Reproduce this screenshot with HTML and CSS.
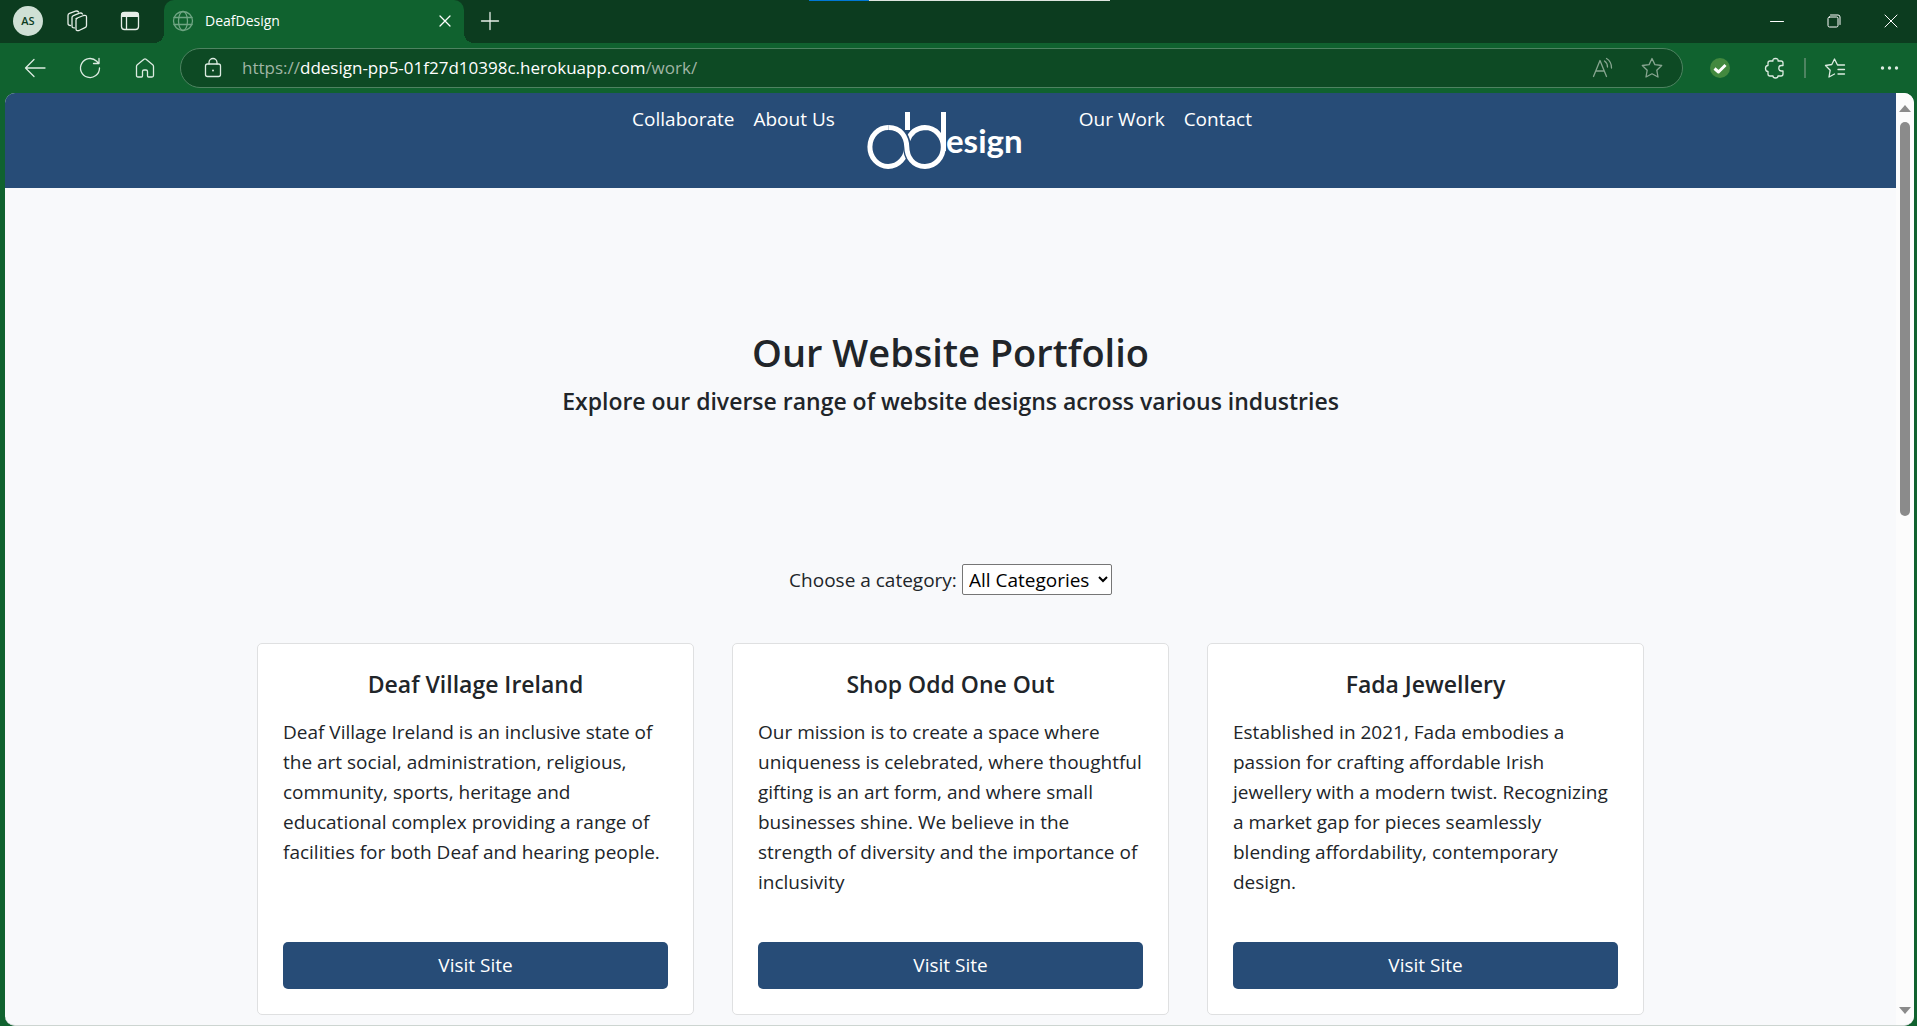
FILE: index.html
```
<!DOCTYPE html>
<html lang="en">
<head>
<meta charset="utf-8">
<title>DeafDesign</title>
<link rel="stylesheet" href="styles.css">
</head>
<body class="browser">
<div class="load-bar"><div class="load-done"></div></div>
<header class="tab-strip">
  <button class="strip-button profile" aria-label="Profile"><span class="avatar">AS</span></button>
  <button class="strip-button" aria-label="Workspaces">
    <svg class="icon" viewBox="0 0 24 24"><path d="M10 9.500 17.500 6.500Q20.500 5.800 20.500 8V16.500Q20.500 18 19 18.700L13 21.500Q10 22.300 10 20V11Q10 9.800 11.500 9.200"/><path d="M8.500 18.800Q6 19 6 17V8.500Q6 7.300 7.500 6.700L13.500 4.200Q15.500 3.500 16.500 5"/><path d="M4.500 16.500Q2 16.500 2 14.500V6.500Q2 5 3.500 4.400L9.500 2.200Q11.500 1.600 12.500 3"/></svg>
  </button>
  <button class="strip-button" aria-label="Tab actions">
    <svg class="icon" viewBox="0 0 24 24"><rect x="3.500" y="3.500" width="17" height="17" rx="3"/><path class="solid" d="M3 8V6Q3 3 6 3H18Q21 3 21 6V8Z"/><path d="M8.500 8V20"/></svg>
  </button>
  <div class="tab">
    <svg class="icon globe" viewBox="0 0 24 24"><circle cx="12" cy="12" r="9.500"/><ellipse cx="12" cy="12" rx="4.500" ry="9.500"/><path d="M3 8.500H21M3 15.500H21"/></svg>
    <span class="tab-title">DeafDesign</span>
    <button class="tab-close" aria-label="Close tab"><svg class="icon-small" viewBox="0 0 12 12"><path d="M1 1 11 11M11 1 1 11"/></svg></button>
  </div>
  <button class="strip-button" aria-label="New tab"><svg class="icon" viewBox="0 0 24 24"><path d="M12 3.500V20.500M3.500 12H20.500"/></svg></button>
  <div class="window-controls">
    <button class="window-button" aria-label="Minimize"><svg class="icon-window" viewBox="0 0 14 14"><path d="M0.500 7.500H13.500"/></svg></button>
    <button class="window-button" aria-label="Restore"><svg class="icon-window" viewBox="0 0 14 14"><rect x="1" y="3" width="10" height="10" rx="1.500"/><path d="M3.500 1H11Q13 1 13 3V10.500"/></svg></button>
    <button class="window-button" aria-label="Close"><svg class="icon-window" viewBox="0 0 14 14"><path d="M1 1 13 13M13 1 1 13"/></svg></button>
  </div>
</header>
<div class="toolbar">
  <button class="tool" aria-label="Back"><svg class="icon" viewBox="0 0 24 24"><path d="M22 12H2.500M11 3.500 2.500 12 11 20.500"/></svg></button>
  <button class="tool" aria-label="Refresh"><svg class="icon" viewBox="0 0 24 24"><path d="M21.500 12A9.500 9.500 0 1 1 18.700 5.300L20.500 7.200M21 2.500V7.500H15.500"/></svg></button>
  <button class="tool" aria-label="Home"><svg class="icon" viewBox="0 0 24 24"><path d="M3.500 10.500Q3.500 9.500 4.300 8.800L11 3.200Q12 2.500 13 3.200L19.700 8.800Q20.500 9.500 20.500 10.500V19.500Q20.500 21 19 21H15.500Q14.500 21 14.500 20V15.500Q14.500 14 13 14H11Q9.500 14 9.500 15.500V20Q9.500 21 8.500 21H5Q3.500 21 3.500 19.500Z"/></svg></button>
  <div class="address">
    <svg class="icon" viewBox="0 0 24 24"><rect x="4.500" y="8" width="15" height="12.500" rx="2"/><path d="M8 8V6.500A4 4 0 0 1 16 6.500V8"/><circle class="solid" cx="12" cy="14.500" r="1"/></svg>
    <a class="url" href="#"><span class="url-dim">https://</span>ddesign-pp5-01f27d10398c.herokuapp.com<span class="url-dim">/work/</span></a>
    <button class="address-button" aria-label="Read aloud"><svg class="icon" viewBox="0 0 24 24"><path d="M2.500 20.500 9 4.500 15.500 20.500M5 15H13"/><path d="M13.500 5Q16.500 7 16.500 11M15.500 2.500Q20.500 5.500 20.500 12"/></svg></button>
    <button class="address-button" aria-label="Add to favorites"><svg class="icon" viewBox="0 0 24 24"><path d="M12 2.500 14.900 8.600 21.700 9.500 16.800 14.200 18 21 12 17.800 6 21 7.200 14.200 2.300 9.500 9.100 8.600Z"/></svg></button>
  </div>
  <button class="tool" aria-label="Extension"><svg class="icon" viewBox="0 0 24 24"><circle class="badge-fill" cx="12" cy="12" r="10"/><path class="badge-check" d="M6.500 12.500 10.500 16 17.500 9"/></svg></button>
  <button class="tool" aria-label="Extensions"><svg class="icon" viewBox="0 0 24 24"><path d="M5 7Q5 5 7 5H10Q9.500 2.500 12.500 2.500Q15.500 2.500 15 5H18Q20 5 20 7V9.500H18.500A2.700 2.700 0 0 0 18.500 15H20V18Q20 20 18 20H15Q15 22 12.500 22Q10 22 10 20H7Q5 20 5 18V15.500Q2.500 15.500 2.500 12.500Q2.500 9.500 5 9.500Z"/></svg></button>
  <span class="divider"></span>
  <button class="tool" aria-label="Favorites"><svg class="icon" viewBox="0 0 24 24"><path d="M21.500 9H14.500L11.500 3 8.800 8.500 2.500 9.500 7.200 14.200 6 21 11.500 18M15 13.500H21.500M15 18H21.500"/></svg></button>
  <button class="tool" aria-label="Settings and more"><svg class="icon" viewBox="0 0 24 24"><circle class="solid" cx="4.500" cy="12" r="1.700"/><circle class="solid" cx="11.500" cy="12" r="1.700"/><circle class="solid" cx="18.500" cy="12" r="1.700"/></svg></button>
</div>
<div class="viewport">
  <div class="page">
    <nav class="navbar">
      <a class="nav-link" href="#">Collaborate</a>
      <a class="nav-link" href="#">About Us</a>
      <a class="logo" href="#" aria-label="Ddesign home">
        <svg class="logo-art" viewBox="0 0 225 75">
          <path class="logo-stroke" d="M62.500 44A18.300 19.500 0 1 1 44.500 24.500"/>
          <path class="logo-stroke" d="M63.500 38Q68 25 81 24.500A18.300 19.500 0 0 1 81 63.500"/>
          <path class="logo-gap" d="M50 25.500Q62.500 30 63 44Q63.500 58 76 62.500"/>
          <path class="logo-stroke" d="M44.500 24.500C57 24.500 62.500 34 62.800 44C63 54 69 63.500 81 63.500"/>
          <path class="logo-stroke" d="M63.500 9V27M99.500 9V48"/>
          <text class="logo-text" x="102" y="50">esign</text>
        </svg>
      </a>
      <a class="nav-link" href="#">Our Work</a>
      <a class="nav-link" href="#">Contact</a>
    </nav>
    <main class="content">
      <section class="intro">
        <h1 class="title">Our Website Portfolio</h1>
        <h2 class="subtitle">Explore our diverse range of website designs across various industries</h2>
      </section>
      <form class="filter">
        <label for="category">Choose a category:</label>
        <select class="category" id="category"><option>All Categories</option></select>
      </form>
      <section class="cards">
        <article class="card">
          <h3 class="card-title">Deaf Village Ireland</h3>
          <p class="card-text">Deaf Village Ireland is an inclusive state of the art social, administration, religious, community, sports, heritage and educational complex providing a range of facilities for both Deaf and hearing people.</p>
          <a class="visit" href="#">Visit Site</a>
        </article>
        <article class="card">
          <h3 class="card-title">Shop Odd One Out</h3>
          <p class="card-text">Our mission is to create a space where uniqueness is celebrated, where thoughtful gifting is an art form, and where small businesses shine. We believe in the strength of diversity and the importance of inclusivity</p>
          <a class="visit" href="#">Visit Site</a>
        </article>
        <article class="card">
          <h3 class="card-title">Fada Jewellery</h3>
          <p class="card-text">Established in 2021, Fada embodies a passion for crafting affordable Irish jewellery with a modern twist. Recognizing a market gap for pieces seamlessly blending affordability, contemporary design.</p>
          <a class="visit" href="#">Visit Site</a>
        </article>
      </section>
    </main>
  </div>
  <div class="scrollbar">
    <svg class="arrow" viewBox="0 0 12 7"><path d="M0 7 6 0 12 7Z"/></svg>
    <div class="track"><div class="thumb"></div></div>
    <svg class="arrow" viewBox="0 0 12 7"><path d="M0 0H12L6 7Z"/></svg>
  </div>
</div>
</body>
</html>
```
FILE: styles.css
```
* { box-sizing: border-box; }

.browser {
  margin: 0;
  height: 100vh;
  overflow: hidden;
  display: flex;
  flex-direction: column;
  background: #10622f;
  font-family: "Open Sans", "Noto Sans", sans-serif;
  color: #212529;
}

button {
  border: 0;
  padding: 0;
  background: none;
  color: inherit;
  font: inherit;
  display: flex;
  align-items: center;
  justify-content: center;
}

a { color: inherit; text-decoration: none; }

.icon, .icon-small, .icon-window {
  flex: none;
  display: block;
  width: 24px;
  height: 24px;
  fill: none;
  stroke: currentColor;
  stroke-width: 1.3;
  stroke-linejoin: round;
  stroke-linecap: round;
}
.icon-small { width: 12px; height: 12px; }
.icon-window { width: 14px; height: 14px; stroke-width: 1; }
.solid { fill: currentColor; stroke: none; }

/* Page-load indicator at the top edge of the window */
.load-bar {
  position: absolute;
  top: 0;
  left: 50%;
  width: 301px;
  height: 1px;
  margin-left: -150px;
  background: #dfe5df;
}
.load-done { width: 20%; height: 1px; background: #0078d4; }

.tab-strip {
  flex: none;
  height: 43px;
  padding-bottom: 1px;
  display: flex;
  background: #0c3c1f;
  color: #e6eee8;
}
.strip-button { width: 52px; }
.profile { width: 48px; margin-left: 4px; }
.avatar {
  width: 30px;
  height: 30px;
  border-radius: 50%;
  background: #cfe0d5;
  color: #0c3c1f;
  font-size: 11px;
  font-weight: 600;
  line-height: 30px;
}
.tab {
  position: relative;
  width: 300px;
  margin: 0 0 -1px 8px;
  padding: 0 10px 2px;
  display: flex;
  align-items: center;
  gap: 10px;
  background: #10622f;
  border-radius: 10px 10px 0 0;
}
.tab::before, .tab::after {
  content: "";
  position: absolute;
  bottom: 0;
  width: 10px;
  height: 10px;
}
.tab::before { left: -10px; background: radial-gradient(circle at 0 0, transparent 10px, #10622f 10px); }
.tab::after { right: -10px; background: radial-gradient(circle at 100% 0, transparent 10px, #10622f 10px); }
.globe { color: #6fa583; margin-left: -3px; }
.tab-title { flex: 1; font-size: 14px; color: #fff; }
.tab-close { width: 18px; height: 18px; color: #fff; }
.window-controls { margin-left: auto; display: flex; gap: 4px; color: #fff; }
.window-button { width: 53px; }

.toolbar {
  flex: none;
  height: 50px;
  padding: 0 0 1px 7px;
  display: flex;
  align-items: center;
  color: #dcebe1;
}
.tool { width: 55px; height: 40px; }
.address {
  flex: 1;
  height: 40px;
  margin: 0 9px 0 8px;
  padding: 0 18px 0 20px;
  display: flex;
  align-items: center;
  border: 1px solid #4e8361;
  border-radius: 20px;
  background: #0d4a24;
}
.url { flex: 1; margin-left: 17px; font-size: 17px; color: #fff; }
.url-dim { color: #a0b5a5; }
.address-button { width: 24px; margin-left: 25px; color: #87a590; }
.divider { width: 2px; height: 20px; margin: 0 1px 0 2px; background: #4e8361; }
.badge-fill { fill: #43893f; stroke: none; }
.badge-check { stroke: #fff; stroke-width: 3; stroke-linecap: butt; }

.viewport {
  flex: 1;
  min-height: 0;
  margin: 0 3px 0 5px;
  display: flex;
  overflow: hidden;
  border-bottom: 1px solid #cdd5d1;
  border-radius: 10px;
  background: #f8f9fb;
}
.page { flex: 1; overflow: hidden; }
.scrollbar {
  flex: none;
  width: 18px;
  padding: 12px 0 11px;
  display: flex;
  flex-direction: column;
  align-items: center;
  gap: 10px;
  background: #fcfcfc;
}
.arrow { width: 12px; height: 7px; fill: #8b8b8b; }
.track { flex: 1; width: 10px; }
.thumb { height: 45%; border-radius: 5px; background: #8b8b8b; }

.navbar {
  display: flex;
  justify-content: center;
  align-items: flex-start;
  padding: 10px 18px 10px 0;
  background: #274c77;
  color: #fff;
  font-size: 19px;
  line-height: 32px;
}
.nav-link { padding: 0 9px 0 10px; }
.logo-art { display: block; width: 225px; height: 75px; }
.logo-stroke { fill: none; stroke: #fff; stroke-width: 5; }
.logo-gap { fill: none; stroke: #274c77; stroke-width: 8; }
.logo-text { fill: #fff; font: 700 33px Lato, sans-serif; }

.content { padding: 0 20px 40px; }
.intro { padding: 140px 0 148px; text-align: center; }
.title { margin: 0 0 10px; font-size: 38px; font-weight: 600; line-height: 48px; }
.subtitle { margin: 0; font-size: 23px; font-weight: 600; line-height: 30px; }
.filter {
  display: flex;
  justify-content: center;
  align-items: center;
  gap: 5px;
  margin-bottom: 48px;
  font-size: 19px;
  line-height: 30px;
}
.category {
  width: 150px;
  height: 31px;
  padding: 0 0 0 2px;
  border: 1px solid #767676;
  border-radius: 2px;
  background: #fff;
  color: #000;
  font: inherit;
}
.cards {
  max-width: 1387px;
  margin: 0 auto;
  display: grid;
  grid-template-columns: repeat(3, 1fr);
  gap: 38px;
}
.card {
  display: flex;
  flex-direction: column;
  padding: 25px;
  border: 1px solid #dfe0e1;
  border-radius: 5px;
  background: #fff;
}
.card-title { margin: 0 0 18px; font-size: 23px; font-weight: 600; line-height: 30px; text-align: center; }
.card-text { flex: 1; margin: 0 0 45px; font-size: 19px; line-height: 30px; }
.visit {
  border-radius: 5px;
  background: #274c77;
  color: #fff;
  font-size: 19px;
  line-height: 47px;
  text-align: center;
}
```
